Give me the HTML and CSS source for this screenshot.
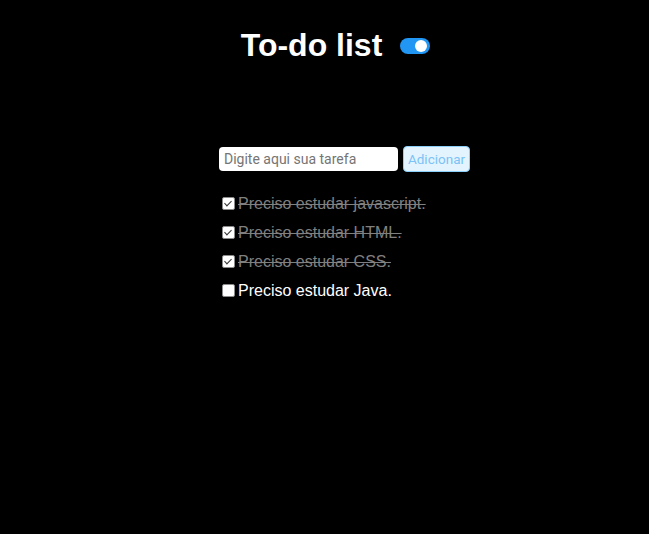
FILE: index.html
```html
<!DOCTYPE html>
<html lang="pt-BR">
<head>
<meta charset="utf-8">
<title>To-do list</title>
<link rel="stylesheet" href="styles.css">
</head>
<body>
<header class="header">
  <h1 class="title">To-do list</h1>
  <label class="switch">
    <input type="checkbox" class="switch-input" checked>
    <span class="switch-track"><span class="switch-knob"></span></span>
  </label>
</header>
<main class="main">
  <form class="form">
    <input class="task-input" type="text" placeholder="Digite aqui sua tarefa">
    <button class="add-btn" type="button">Adicionar</button>
  </form>
  <ul class="list">
    <li class="item done"><input type="checkbox" class="check" checked><span class="text">Preciso estudar javascript.</span></li>
    <li class="item done"><input type="checkbox" class="check" checked><span class="text">Preciso estudar HTML.</span></li>
    <li class="item done"><input type="checkbox" class="check" checked><span class="text">Preciso estudar CSS.</span></li>
    <li class="item"><input type="checkbox" class="check"><span class="text">Preciso estudar Java.</span></li>
  </ul>
</main>
</body>
</html>
```
FILE: styles.css
```css
html, body {
  margin: 0;
  padding: 0;
  background: #000;
}
body {
  font-family: "Liberation Sans", Arial, sans-serif;
  color: #fff;
  width: 649px;
  height: 534px;
  overflow: hidden;
}
.header {
  display: flex;
  justify-content: center;
  align-items: center;
  gap: 18px;
  padding: 27px 0 0 22px;
}
.title {
  margin: 0;
  font-size: 32px;
  line-height: 37px;
  font-weight: bold;
}
.switch {
  display: block;
  margin-top: 1px;
}
.switch-input {
  display: none;
}
.switch-track {
  display: flex;
  justify-content: flex-end;
  align-items: center;
  width: 30px;
  height: 16px;
  box-sizing: border-box;
  padding: 0 3px;
  border-radius: 8px;
  background: #2196f3;
}
.switch-knob {
  width: 12px;
  height: 12px;
  border-radius: 50%;
  background: #fff;
}
.main {
  width: 213px;
  margin: 0 auto 0 218px;
  padding-top: 82px;
}
.form {
  display: flex;
  align-items: center;
  gap: 5px;
  margin: 0 0 0 1px;
  white-space: nowrap;
  height: 26px;
}
.task-input {
  width: 179px;
  height: 24px;
  box-sizing: border-box;
  border: none;
  border-radius: 4px;
  padding: 0 5px;
  font-family: Roboto, "Liberation Sans", Arial, sans-serif;
  font-size: 14px;
  background: #fff;
  color: #000;
  flex: none;
}
.task-input::placeholder {
  color: #757575;
}
.add-btn {
  flex: none;
  width: 67px;
  height: 26px;
  box-sizing: border-box;
  padding: 0;
  border: 1px solid #8ccff8;
  border-radius: 4px;
  background: #e3f4fe;
  color: #7cc2f6;
  font-family: Roboto, "Liberation Sans", Arial, sans-serif;
  font-size: 13.5px;
}
.list {
  list-style: none;
  margin: 0;
  padding: 17px 0 0 0;
}
.item {
  display: flex;
  align-items: center;
  height: 29px;
  font-size: 16px;
  white-space: nowrap;
}
.check {
  -webkit-appearance: none;
  appearance: none;
  position: relative;
  width: 13px;
  height: 13px;
  margin: 0 3px 0 4px;
  box-sizing: border-box;
  border: 1px solid #8a8a8a;
  border-radius: 2px;
  background: #fff;
  flex: none;
}
.check:checked::after {
  content: "";
  position: absolute;
  left: 3px;
  top: 1px;
  width: 3px;
  height: 6px;
  border: solid #333;
  border-width: 0 1.5px 1.5px 0;
  transform: rotate(45deg);
}
.done .text {
  color: #808080;
  text-decoration: line-through;
}
```
